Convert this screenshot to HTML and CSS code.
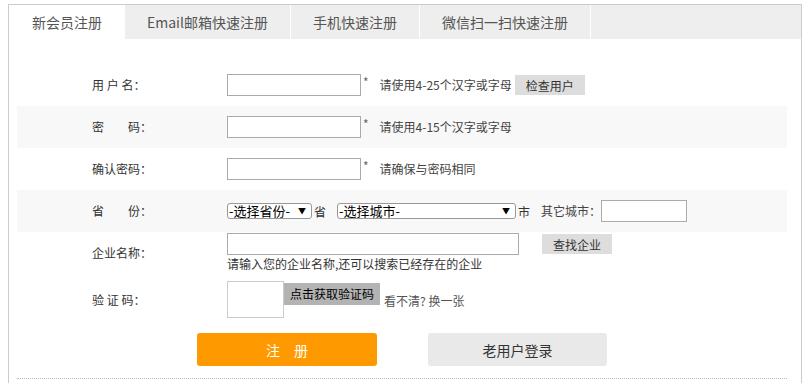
FILE: index.html
```html
<!DOCTYPE html>
<html lang="zh-CN">
<head>
  <meta charset="UTF-8">
  <meta name="viewport" content="width=device-width, initial-scale=1.0">
  <title>新会员注册</title>
  <link rel="stylesheet" href="styles.css">
</head>
<body>
  <div class="reg-box">
    <ul class="tabs">
      <li class="tab active">新会员注册</li>
      <li class="tab">Email邮箱快速注册</li>
      <li class="tab">手机快速注册</li>
      <li class="tab">微信扫一扫快速注册</li>
    </ul>

    <form class="reg-form">
      <div class="row">
        <label class="lbl">用 户 名：</label>
        <div class="field">
          <input class="txt" type="text">
          <span class="star">*</span>
          <span class="tip">请使用4-25个汉字或字母</span>
          <button type="button" class="btn-small check">检查用户</button>
        </div>
      </div>

      <div class="row alt">
        <label class="lbl">密　　码：</label>
        <div class="field">
          <input class="txt" type="password">
          <span class="star">*</span>
          <span class="tip">请使用4-15个汉字或字母</span>
        </div>
      </div>

      <div class="row">
        <label class="lbl">确认密码：</label>
        <div class="field">
          <input class="txt" type="password">
          <span class="star">*</span>
          <span class="tip">请确保与密码相同</span>
        </div>
      </div>

      <div class="row alt">
        <label class="lbl">省　　份：</label>
        <div class="field">
          <span class="sel province">
            <select><option>-选择省份-</option></select>
          </span>
          <span class="unit">省</span>
          <span class="sel city">
            <select><option>-选择城市-</option></select>
          </span>
          <span class="unit">市</span>
          <span class="tip">其它城市：</span>
          <input class="txt short" type="text">
        </div>
      </div>

      <div class="row company">
        <label class="lbl">企业名称：</label>
        <div class="field stack">
          <div class="line">
            <input class="txt long" type="text">
            <button type="button" class="btn-small find">查找企业</button>
          </div>
          <p class="help">请输入您的企业名称,还可以搜索已经存在的企业</p>
        </div>
      </div>

      <div class="row captcha">
        <label class="lbl">验 证 码：</label>
        <div class="field top">
          <input class="txt code" type="text">
          <span class="code-img">点击获取验证码</span>
          <span class="refresh">看不清? 换一张</span>
        </div>
      </div>

      <div class="actions">
        <button type="button" class="btn-reg">注　册</button>
        <button type="button" class="btn-login">老用户登录</button>
      </div>
    </form>
  </div>
</body>
</html>
```

FILE: styles.css
```css
body {
  margin: 4px 0 0 8px;
  background: #fff;
  font-family: "Noto Sans CJK SC", "Microsoft YaHei", sans-serif;
  color: #333;
}

.reg-box {
  width: 794px;
  box-sizing: border-box;
  border: 1px solid #ccc;
  border-bottom: none;
  height: 379px;
}

/* tabs */
.tabs {
  list-style: none;
  margin: 0;
  padding: 0;
  display: flex;
  height: 34px;
  background: #eee;
}

.tab {
  padding: 0 22px;
  line-height: 34px;
  font-size: 14px;
  color: #555;
  border-right: 1px solid #fff;
}

.tab.active {
  background: #fff;
  padding-left: 23px;
}

/* form rows */
.reg-form {
  padding: 25px 14px 0 8px;
}

.row {
  display: flex;
  align-items: center;
  height: 42px;
}

.row.alt {
  background: #f8f8f8;
}

.lbl {
  width: 135px;
  padding-left: 75px;
  font-size: 12px;
  line-height: 16px;
  color: #333;
}

.field {
  display: flex;
  align-items: center;
  font-size: 12px;
}

.txt {
  width: 134px;
  height: 22px;
  box-sizing: border-box;
  border: 1px solid #aaa;
  padding: 0 3px;
  margin: 0;
  font-size: 12px;
  outline: none;
}

.star {
  margin: 0 11px 0 2px;
  color: #666;
  line-height: 12px;
  align-self: flex-start;
  margin-top: 2px;
}

.tip {
  color: #444;
  line-height: 16px;
}

.btn-small {
  height: 20px;
  border: none;
  padding: 0;
  width: 70px;
  background: #ddd;
  font-family: inherit;
  font-size: 12px;
  color: #333;
}

.check {
  margin-left: 3px;
}

/* selects */
.sel {
  position: relative;
  display: inline-block;
}

.sel select {
  appearance: none;
  -webkit-appearance: none;
  display: block;
  height: 16px;
  box-sizing: border-box;
  border: 1px solid #999;
  border-radius: 3px;
  padding: 0 0 0 1px;
  background: #fff;
  font-family: inherit;
  font-size: 13px;
  line-height: 14px;
  color: #000;
}

.sel::after {
  content: "\25BC";
  position: absolute;
  top: 0;
  right: 6px;
  font-size: 8px;
  line-height: 16px;
  color: #000;
  pointer-events: none;
}

.province select {
  width: 85px;
}

.city select {
  width: 179px;
}

.unit {
  margin: 0 11px 0 2px;
  color: #333;
}

.txt.short {
  width: 86px;
}

/* company */
.row.company {
  height: auto;
  padding: 1px 0 6px;
}

.field.stack {
  flex-direction: column;
  align-items: flex-start;
}

.line {
  display: flex;
  align-items: center;
}

.txt.long {
  width: 292px;
}

.find {
  margin-left: 23px;
}

.help {
  margin: 0;
  line-height: 18px;
  color: #333;
}

/* captcha */
.row.captcha {
  height: auto;
  padding: 2px 0;
}

.field.top {
  align-items: flex-start;
}

.txt.code {
  width: 57px;
  height: 37px;
  border-color: #ccc;
}

.code-img {
  margin-top: 2px;
  width: 96px;
  height: 22px;
  line-height: 22px;
  text-align: center;
  background: #b3b3b3;
  color: #000;
}

.refresh {
  margin: 12px 0 0 4px;
  line-height: 16px;
  color: #555;
}

/* buttons */
.actions {
  display: flex;
  justify-content: center;
  gap: 51px;
  padding: 13px 0 12px;
  border-bottom: 1px dotted #bbb;
}

.btn-reg,
.btn-login {
  height: 33px;
  border: none;
  border-radius: 3px;
  font-family: inherit;
  font-size: 14px;
}

.btn-reg {
  width: 180px;
  background: #ff9900;
  color: #fff;
}

.btn-login {
  width: 179px;
  background: #e9e9e9;
  color: #333;
}
```
